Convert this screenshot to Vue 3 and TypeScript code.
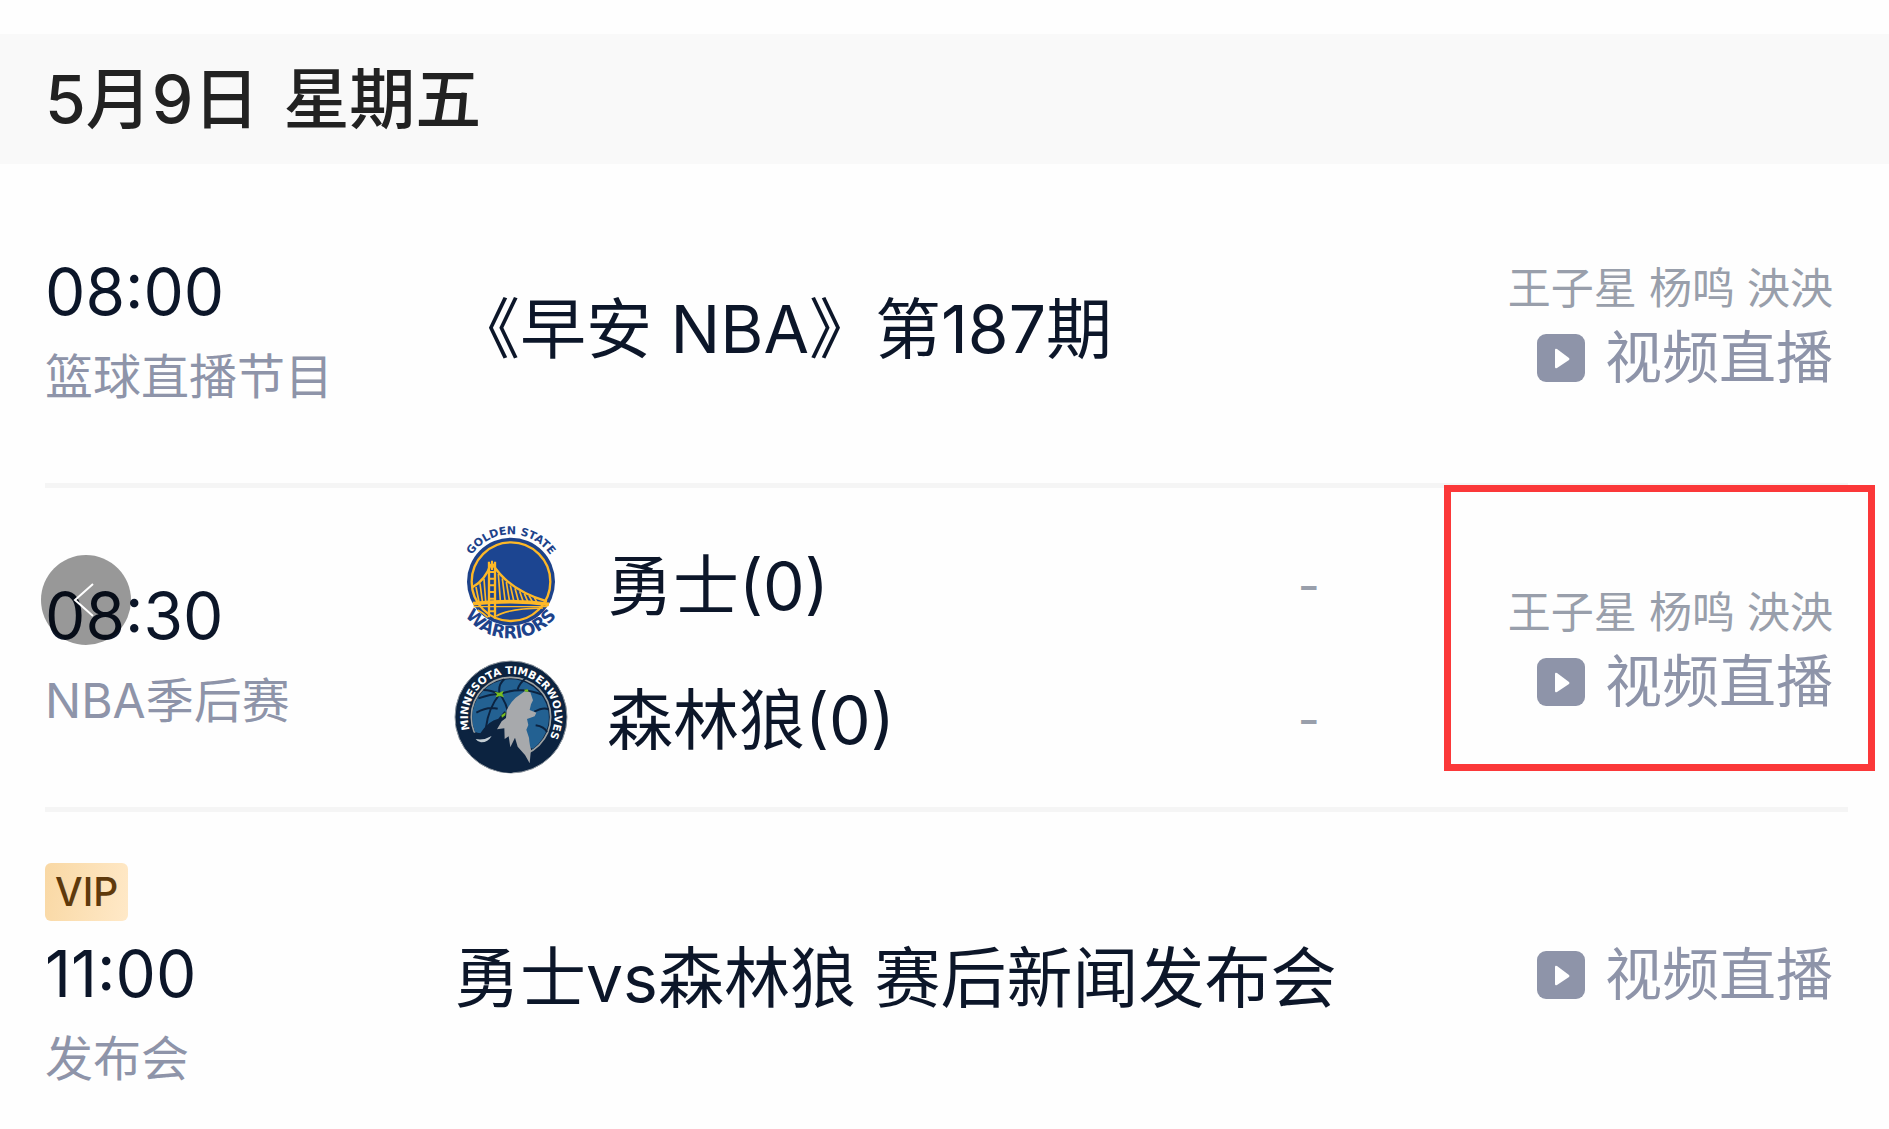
<script setup lang="ts">
interface Team {
  name: string
  logo: 'warriors' | 'wolves'
  score: string
}

interface Programme {
  time: string
  category: string
  vip?: boolean
  title?: string
  teams?: Team[]
  hosts?: string
  marked?: boolean
}

const day = '5月9日'
const weekday = '星期五'

const programmes: Programme[] = [
  { time: '08:00', category: '篮球直播节目', title: '《早安 NBA》第187期', hosts: '王子星 杨鸣 泱泱' },
  {
    time: '08:30',
    category: 'NBA季后赛',
    teams: [
      { name: '勇士(0)', logo: 'warriors', score: '-' },
      { name: '森林狼(0)', logo: 'wolves', score: '-' },
    ],
    hosts: '王子星 杨鸣 泱泱',
    marked: true,
  },
  { time: '11:00', category: '发布会', vip: true, title: '勇士vs森林狼 赛后新闻发布会' },
]
</script>

<template>
  <main class="page">
    <h1 class="date"><span>{{ day }}</span><span>{{ weekday }}</span></h1>
    <ul class="list">
      <li v-for="item in programmes" :key="item.time" class="row">
        <div class="when">
          <span v-if="item.vip" class="vip">VIP</span>
          <time class="time">{{ item.time }}</time>
          <span class="category">{{ item.category }}</span>
        </div>

        <h2 v-if="item.title" class="title">{{ item.title }}</h2>
        <div v-else class="teams">
          <div v-for="team in item.teams" :key="team.name" class="team">
            <svg v-if="team.logo === 'warriors'" class="logo" viewBox="24 33 372 372" aria-hidden="true">
              <defs>
                <path id="gsw-top" d="M68 215a142 142 0 0 1 284 0" />
                <path id="gsw-bottom" d="M38 213a172 172 0 0 0 344 0" />
              </defs>
              <circle cx="210" cy="215" r="132" fill="#1d428a" />
              <circle cx="210" cy="215" r="118" fill="#1c4591" stroke="#fdb827" stroke-width="7" />
              <g fill="none" stroke="#fdb827">
                <path d="M94 232Q132 212 150 162M154 162Q205 242 318 274" stroke-width="7" />
                <path d="M96 281Q220 268 324 283" stroke-width="11" />
                <path d="M98 290H318" stroke-width="4" />
                <path d="M105 231L114 276M117 220L124 274M129 207L134 273M172 192L178 271M184 205L192 270M196 216L205 270M208 226L218 271M222 235L232 272M236 244L246 273M250 251L260 274M264 257L274 275M280 263L288 277" stroke-width="5" />
                <path d="M144 155V322M162 155V326" stroke-width="7" />
                <path d="M153 152V180M144 186H162M144 206H162M144 226H162M144 246H162M144 266H162M144 304H162" stroke-width="6" />
                <path d="M110 300Q128 310 140 322M166 318Q200 296 306 294" stroke-width="5" />
              </g>
              <text class="logo-text" font-size="33" fill="#1d428a" text-anchor="middle"><textPath href="#gsw-top" startOffset="50%">GOLDEN STATE</textPath></text>
              <text class="logo-text" font-size="52" fill="#1d428a" text-anchor="middle"><textPath href="#gsw-bottom" startOffset="50%">WARRIORS</textPath></text>
            </svg>
            <svg v-else class="logo" viewBox="24 15 372 372" aria-hidden="true">
              <defs>
                <path id="wolves-ring" d="M136 308A130 130 0 1 1 341 201A130 130 0 0 1 286 307" />
              </defs>
              <circle cx="210" cy="201" r="168" fill="#0c2340" stroke="#8f979f" stroke-width="3" />
              <circle cx="210" cy="201" r="119" fill="#0c2340" stroke="#9ea2a2" stroke-width="5" />
              <path d="M102 246A115 115 0 1 1 276 296Z" fill="#236192" />
              <g fill="none" stroke="#0c2340" stroke-width="6">
                <path d="M112 145Q150 132 176 132Q245 108 302 134M176 132Q198 160 202 195M176 132Q142 175 135 232M176 132Q170 105 190 88M128 120Q148 120 176 132M255 84Q235 100 230 118M106 188Q140 168 170 176M280 185Q308 170 322 178M284 226Q310 230 318 246" />
              </g>
              <path d="M44 222Q82 250 118 250Q142 212 172 206L190 184L218 200L250 290L266 318L300 306Q260 352 210 369Q100 365 44 222Z" fill="#0c2340" />
              <path d="M104 267Q128 272 152 258Q140 278 120 277Q110 276 104 267Z" fill="#c4ced4" />
              <path d="M197 181Q207 158 224 143L251 124L268 127L276 151L270 163L266 180L286 188L281 199L258 207L262 225L256 239L264 263Q266 286 270 298L266 340L252 315L230 290L222 263L208 292L203 259L191 267L190 235L168 238L182 214L195 204Z" fill="#a7a9ac" />
              <path d="M160 125L175 128L188 122L184 132L189 142L176 138L164 142L168 133ZM181 196L194 187L193 196L183 203ZM249 119L260 118L263 125L253 125Z" fill="#78be20" />
              <text class="logo-text" font-size="32" fill="#fff" text-anchor="middle"><textPath href="#wolves-ring" startOffset="52%">MINNESOTA TIMBERWOLVES</textPath></text>
            </svg>
            <span class="team-name">{{ team.name }}</span>
            <span class="score">{{ team.score }}</span>
          </div>
        </div>

        <div class="live">
          <span v-if="item.hosts" class="hosts">{{ item.hosts }}</span>
          <a class="watch" href="#">
            <svg class="play" viewBox="0 0 48 48" aria-hidden="true">
              <rect width="48" height="48" rx="9" fill="#8e94a9" />
              <path d="M18 16v17q0 2 2 1l12-8q1-1 0-2l-12-9q-2-1-2 1z" fill="#fff" />
            </svg>
            视频直播
          </a>
        </div>
        <span v-if="item.marked" class="mark"></span>
      </li>
    </ul>
    <button class="back" type="button" aria-label="返回">
      <svg viewBox="0 0 90 90" aria-hidden="true">
        <path d="M52 29L34 45L52 61" fill="none" stroke="#fff" stroke-width="2" />
      </svg>
    </button>
  </main>
</template>

<style>
body {
  margin: 0;
  background: #fefefe;
}
</style>

<style scoped>
.page {
  position: relative;
  padding-top: 34px;
  font-family: Inter, "Noto Sans CJK SC", sans-serif;
  color: #0c1629;
}
.date {
  display: flex;
  gap: 24px;
  margin: 0;
  padding: 0 45px;
  background: #f9f9f9;
  font-size: 66px;
  font-weight: 500;
  line-height: 130px;
  color: #222;
}
.list {
  margin: 0;
  padding: 0 41px 0 45px;
  list-style: none;
}
.row {
  position: relative;
  display: grid;
  grid-template-columns: 409px 1fr auto;
  align-items: center;
  box-sizing: border-box;
  min-height: 324px;
  padding: 4px 15px 0 0;
  border-bottom: 5px solid #f5f5f5;
}
.row:last-child {
  min-height: 317px;
  padding-top: 8px;
  border-bottom: 0;
}
.when {
  display: flex;
  flex-direction: column;
  align-items: flex-start;
  padding-top: 8px;
}
.vip {
  padding: 0 10px;
  border-radius: 6px;
  background: linear-gradient(100deg, #f9d8a4, #ffe9c8);
  font-size: 39px;
  font-weight: 500;
  line-height: 58px;
  color: #5f3a0c;
}
.time {
  font-size: 64px;
  line-height: 90px;
}
.vip + .time {
  margin-top: 8px;
}
.category {
  margin-top: 4px;
  font-size: 48px;
  line-height: 72px;
  color: #8e94a9;
}
.title {
  margin: 0;
  padding-top: 6px;
  font-size: 66px;
  font-weight: 400;
  line-height: 90px;
  white-space: nowrap;
}
.team {
  display: flex;
  align-items: center;
  height: 134px;
}
.logo {
  width: 124px;
  height: 124px;
  margin: 0 34px 0 -5px;
  overflow: visible;
}
.logo-text {
  font-family: "DejaVu Sans", sans-serif;
  font-weight: 700;
}
.team-name {
  flex: 1;
  padding-top: 6px;
  font-size: 66px;
  line-height: 90px;
}
.score {
  margin-right: 188px;
  padding-top: 6px;
  font-size: 48px;
  line-height: 72px;
  color: #999fab;
}
.live {
  display: flex;
  flex-direction: column;
  align-items: flex-end;
}
.hosts {
  font-size: 43px;
  line-height: 64px;
  color: #999fab;
}
.watch {
  display: flex;
  align-items: center;
  gap: 20px;
  font-size: 57px;
  line-height: 76px;
  color: #8e94a9;
  text-decoration: none;
}
.play {
  width: 48px;
  height: 48px;
}
.mark {
  position: absolute;
  top: -3px;
  right: -27px;
  box-sizing: border-box;
  width: 431px;
  height: 286px;
  border: 7px solid #fb3839;
  pointer-events: none;
}
.back {
  position: absolute;
  top: 555px;
  left: 41px;
  width: 90px;
  height: 90px;
  padding: 0;
  border: 0;
  border-radius: 50%;
  background: rgba(0, 0, 0, 0.4);
}
.back svg {
  display: block;
}
</style>
